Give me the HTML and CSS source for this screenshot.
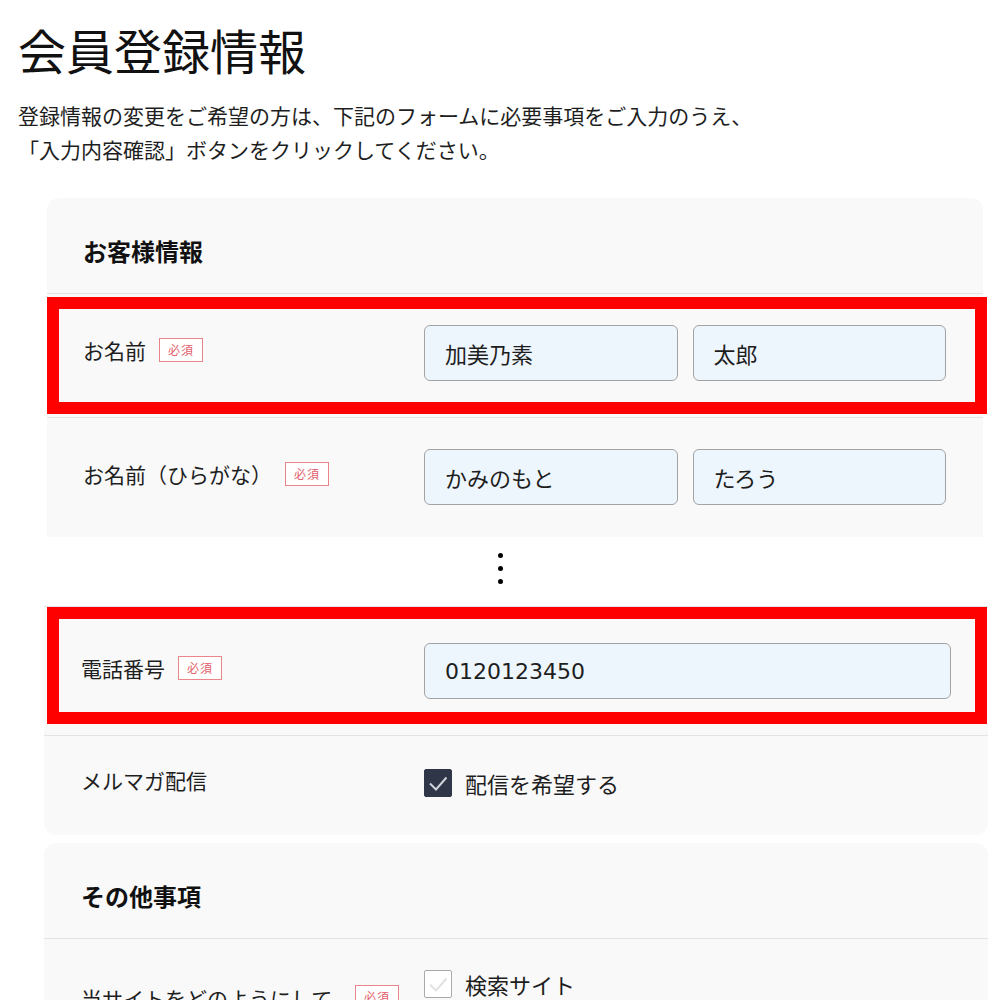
FILE: index.html
```html
<!DOCTYPE html>
<html lang="ja">
<head>
  <meta charset="utf-8">
  <title>会員登録情報</title>
  <link rel="stylesheet" href="styles.css">
</head>
<body>

  <main class="page">
    <h1 class="page-title">会員登録情報</h1>
    <p class="lead">登録情報の変更をご希望の方は、下記のフォームに必要事項をご入力のうえ、<br>「入力内容確認」ボタンをクリックしてください。</p>

    <section class="card card--cut">
      <h2 class="card-title">お客様情報</h2>

      <div class="row row--marked">
        <div class="row-label">お名前<span class="req">必須</span></div>
        <div class="row-field row-field--split">
          <input class="text-input" type="text" value="加美乃素">
          <input class="text-input" type="text" value="太郎">
        </div>
      </div>

      <div class="row">
        <div class="row-label">お名前（ひらがな）<span class="req">必須</span></div>
        <div class="row-field row-field--split">
          <input class="text-input" type="text" value="かみのもと">
          <input class="text-input" type="text" value="たろう">
        </div>
      </div>
    </section>

    <div class="more">
      <span class="dot"></span>
      <span class="dot"></span>
      <span class="dot"></span>
    </div>

    <section class="card card--wide card--tail">
      <div class="row row--marked">
        <div class="row-label">電話番号<span class="req">必須</span></div>
        <div class="row-field">
          <input class="text-input" type="tel" value="0120123450">
        </div>
      </div>

      <div class="row">
        <div class="row-label">メルマガ配信</div>
        <div class="row-field">
          <label class="check">
            <span class="check-box check-box--on">
              <svg viewBox="0 0 28 28" width="28" height="28"><path d="M6 14.5 L12 20.5 L22.5 8.5" fill="none" stroke="#cfd3da" stroke-width="2"/></svg>
            </span>
            配信を希望する
          </label>
        </div>
      </div>
    </section>

    <section class="card card--wide card--next">
      <h2 class="card-title">その他事項</h2>

      <div class="row row--top">
        <div class="row-label row-label--wrap"><span class="label-text">当サイトをどのようにして知りましたか</span><span class="req">必須</span></div>
        <div class="row-field options">
          <label class="check">
            <span class="check-box">
              <svg viewBox="0 0 28 28" width="28" height="28"><path d="M6 14.5 L12 20.5 L22.5 8.5" fill="none" stroke="#e2e2e2" stroke-width="2"/></svg>
            </span>
            検索サイト
          </label>
          <label class="check">
            <span class="check-box">
              <svg viewBox="0 0 28 28" width="28" height="28"><path d="M6 14.5 L12 20.5 L22.5 8.5" fill="none" stroke="#e2e2e2" stroke-width="2"/></svg>
            </span>
            SNS
          </label>
          <label class="check">
            <span class="check-box">
              <svg viewBox="0 0 28 28" width="28" height="28"><path d="M6 14.5 L12 20.5 L22.5 8.5" fill="none" stroke="#e2e2e2" stroke-width="2"/></svg>
            </span>
            知人の紹介
          </label>
        </div>
      </div>
    </section>
  </main>

</body>
</html>
```

FILE: styles.css
```css
body {
  margin: 0;
  padding: 0;
  background-color: #fff;
  color: #1e1e1e;
  font-family: "Noto Sans CJK JP", sans-serif;
}

.page {
  width: 1000px;
  padding-bottom: 40px;
}

.page-title {
  margin: 21px 0 0 18px;
  font-size: 48px;
  font-weight: normal;
  line-height: 56px;
  color: #111;
}

.lead {
  margin: 21px 0 0 18px;
  font-size: 21px;
  line-height: 34px;
}

.card {
  margin: 32px 17px 0 47px;
  background-color: #f9f9f9;
  border-radius: 12px;
  padding: 0 37px 0 36px;
}

.card--cut {
  border-radius: 12px 12px 0 0;
}

.card--cut .row:last-child {
  padding-bottom: 32px;
  border-bottom: none;
}

.card--wide {
  margin: 0 12px 0 44px;
  padding: 0 37px;
}

.card--tail {
  border-top: 1px solid #e3e3e3;
  border-radius: 0 0 12px 12px;
  padding-top: 5px;
}

.card--next {
  margin-top: 8px;
}

.card-title {
  margin: 0 -37px 0 -36px;
  padding: 37px 36px 26px;
  font-size: 24px;
  font-weight: bold;
  line-height: 32px;
  color: #111;
  border-bottom: 1px solid #e3e3e3;
}

.card--wide .card-title {
  margin: 0 -37px;
  padding: 37px 37px 26px;
}

.row {
  display: grid;
  grid-template-columns: 341px minmax(0, 1fr);
  align-items: center;
  padding: 31px 37px 36px 36px;
  margin: 0 -37px 0 -36px;
  border-bottom: 1px solid #e3e3e3;
  position: relative;
}

.card--wide .row {
  grid-template-columns: 343px minmax(0, 1fr);
  margin: 0 -37px;
  padding-left: 37px;
  padding-right: 37px;
}

.card--wide .row:last-child {
  border-bottom: none;
}

.row--top {
  align-items: start;
}

/* red frame marking the changed rows */
.row--marked::after {
  content: "";
  position: absolute;
  top: 3px;
  bottom: 3px;
  left: 0;
  right: -4px;
  border: 12px solid #ff0000;
  pointer-events: none;
}

.card--wide .row--marked::after {
  top: -5px;
  bottom: 11px;
  left: 3px;
  right: 1px;
}

.row-label {
  display: flex;
  align-items: center;
  margin-top: -3px;
  padding-bottom: 3px;
  font-size: 21px;
  line-height: 32px;
}

.row-label--wrap {
  align-items: flex-start;
  margin-top: 12px;
  padding-bottom: 0;
}

.label-text {
  width: 261px;
}

.req {
  display: inline-block;
  box-sizing: border-box;
  width: 44px;
  height: 24px;
  margin-left: 13px;
  border: 1px solid #e9858b;
  background-color: #fff;
  color: #e2606b;
  font-size: 12px;
  line-height: 22px;
  text-align: center;
  letter-spacing: 1px;
}

.row-label--wrap .req {
  margin-top: 3px;
}

.row-field {
  display: flex;
  min-width: 0;
}

.row-field--split {
  gap: 15px;
}

.text-input {
  flex: 1 1 0;
  width: 0;
  min-width: 0;
  box-sizing: border-box;
  height: 56px;
  padding: 0 20px;
  border: 1.5px solid #a3a3a3;
  border-radius: 6px;
  background-color: #eef6fd;
  color: #1e1e1e;
  font-family: "DejaVu Sans", "Noto Sans CJK JP", sans-serif;
  font-size: 22px;
}

.options {
  flex-direction: column;
  gap: 14px;
}

.check {
  display: flex;
  align-items: center;
  gap: 13px;
  font-size: 22px;
  line-height: 28px;
}

.check-box {
  display: block;
  box-sizing: border-box;
  width: 28px;
  height: 28px;
  border: 1.5px solid #aaa;
  border-radius: 2px;
  background-color: #fff;
}

.check-box svg {
  display: block;
  margin: -1.5px;
}

.check-box--on {
  border-color: #2e3648;
  background-color: #2e3648;
}

.more {
  display: flex;
  flex-direction: column;
  align-items: center;
  gap: 8px;
  padding: 16px 0 22px;
}

.dot {
  width: 5px;
  height: 5px;
  border-radius: 50%;
  background-color: #000;
}
```
